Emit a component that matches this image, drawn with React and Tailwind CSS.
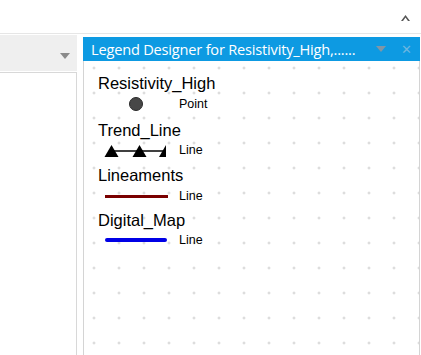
import React from "react";

function Tri({ className }) {
  return (
    <svg width="10" height="6" viewBox="0 0 10 6" className={className}>
      <path d="M0 0 L10 0 L5 6 Z" fill="currentColor" />
    </svg>
  );
}

export default function App() {
  const label = "font-['Liberation_Sans',Arial,sans-serif]";
  return (
    <div className={`w-[421px] h-[355px] bg-white overflow-hidden flex flex-col ${label}`}>
      {/* top bar */}
      <div className="h-[34px] shrink-0 border-b border-[#e6e6e6] flex items-center justify-end pr-[11px]">
        <svg width="9" height="6" viewBox="0 0 9 6" className="text-[#555] mt-[2px]">
          <path d="M0 6 L4.5 0 L9 6 L7 6 L4.5 2.5 L2 6 Z" fill="currentColor" />
        </svg>
      </div>
      <div className="flex-1 flex gap-[6px] min-h-0">
        {/* left panel */}
        <div className="w-[77px] shrink-0 flex flex-col">
          <div className="h-[36px] mt-[1px] bg-[#efefef] flex items-center justify-end pr-[7px] pt-[6px]">
            <Tri className="text-[#8a8a8a]" />
          </div>
          <div className="flex-1 border-t border-r border-[#d8d8d8] mt-[1px]" />
        </div>
        {/* right panel */}
        <div className="flex-1 flex flex-col mt-[3px] mr-[1px]">
          <div className="h-[24px] bg-[#0d9ae2] flex items-center pl-[8px] pr-[8px]">
            <span className="text-white text-[14.6px] font-['Open_Sans',sans-serif] tracking-[-0.2px] leading-none whitespace-nowrap">
              Legend Designer for Resistivity_High,......
            </span>
            <div className="flex-1" />
            <Tri className="text-[#8096a6] mr-[15px]" />
            <span className="text-[#6cb6e0] text-[13px] leading-none font-['Open_Sans',sans-serif]">✕</span>
          </div>
          <div className="flex-1 border-l border-r border-[#d4d4d4] bg-[radial-gradient(circle,#c4c4c4_0.9px,transparent_1.2px)] bg-[size:25px_25px] bg-[position:-2.5px_-5.5px] pl-[14px] pt-[12px] text-black">
            <div className="text-[16.5px] h-[20px] leading-[20px]">Resistivity_High</div>
            <div className="flex items-center h-[22px]">
              <div className="w-[81px] flex">
                <div className="ml-[31px] w-[14px] h-[14px] rounded-full bg-[#474747] border border-[#2a2a2a]" />
              </div>
              <span className="text-[12.5px]">Point</span>
            </div>
            <div className="text-[16.5px] h-[20px] leading-[20px] mt-[5px]">Trend_Line</div>
            <div className="flex items-center h-[20px]">
              <svg width="81" height="13" viewBox="0 0 81 13">
                <line x1="14" y1="7" x2="68" y2="7" stroke="#000" strokeWidth="1.3" />
                <path d="M6.5 13 L13.5 1 L20.5 13 Z" fill="#000" />
                <path d="M34.5 13 L41.5 1 L48.5 13 Z" fill="#000" />
                <path d="M61 13 L68 1 L68 13 Z" fill="#000" />
              </svg>
              <span className="text-[12.5px]">Line</span>
            </div>
            <div className="text-[16.5px] h-[20px] leading-[20px] mt-[5px]">Lineaments</div>
            <div className="flex items-center h-[22px]">
              <div className="w-[81px] flex">
                <div className="ml-[7px] w-[63px] h-[3px] bg-[#7a0000]" />
              </div>
              <span className="text-[12.5px]">Line</span>
            </div>
            <div className="text-[16.5px] h-[20px] leading-[20px] mt-[3px]">Digital_Map</div>
            <div className="flex items-center h-[20px]">
              <div className="w-[81px] flex">
                <div className="ml-[7px] w-[62px] h-[4px] rounded-full bg-[#0000e6]" />
              </div>
              <span className="text-[12.5px]">Line</span>
            </div>
          </div>
        </div>
      </div>
    </div>
  );
}
